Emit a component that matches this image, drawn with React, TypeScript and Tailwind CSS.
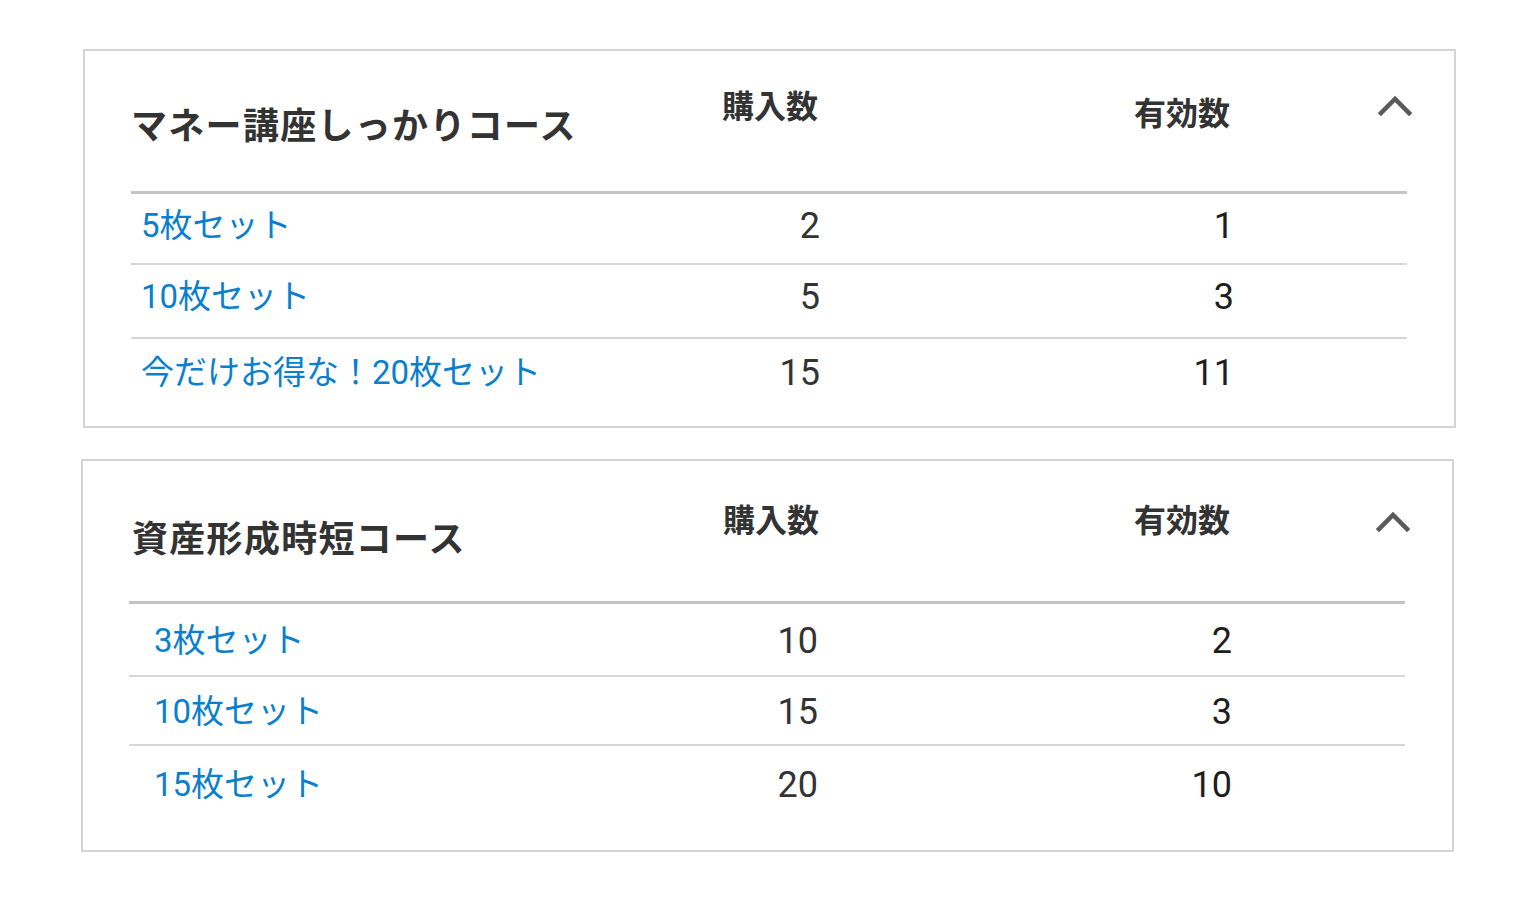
import React from "react";

type Row = { name: string; bought: string; valid: string; h: string };

const Chevron = () => (
  <svg width="34" height="24" viewBox="0 0 34 24" className="block">
    <polyline points="3,20 17,6 31,20" fill="none" stroke="#5a5a5a" strokeWidth="4.5" strokeLinecap="square" />
  </svg>
);

function Card(props: {
  cls: string;
  title: string;
  titlePt: string;
  h1Pt: string;
  h2Pt: string;
  chevPt: string;
  namePl: string;
  rows: Row[];
  bottom: string;
}) {
  return (
    <div className={`border-2 border-[#d4d4d4] bg-white w-[1373px] pl-[46px] pr-[47px] ${props.cls}`}>
      <div className="flex h-[140px] items-start">
        <div
          className={`flex-1 text-[36px] leading-[40px] font-bold text-[#333] tracking-[1.3px] ${props.titlePt}`}
          style={{ fontFamily: "'Noto Sans CJK JP', sans-serif" }}
        >
          {props.title}
        </div>
        <div
          className={`w-[120px] text-right text-[32px] leading-[40px] font-bold text-[#333] ${props.h1Pt}`}
          style={{ fontFamily: "'Noto Sans CJK JP', sans-serif" }}
        >
          購入数
        </div>
        <div
          className={`w-[411px] text-right text-[32px] leading-[40px] font-bold text-[#333] ${props.h2Pt}`}
          style={{ fontFamily: "'Noto Sans CJK JP', sans-serif" }}
        >
          有効数
        </div>
        <div className={`w-[176px] flex justify-end -mr-[5px] ${props.chevPt}`}>
          <Chevron />
        </div>
      </div>
      <div className="h-[3px] bg-[#c4c4c4]" />
      {props.rows.map((r, i) => (
        <div
          key={i}
          className={`flex items-center ${r.h} ${i < props.rows.length - 1 ? "border-b-2 border-[#d6d6d6]" : ""}`}
          style={{ fontFamily: "Roboto, 'Noto Sans CJK JP', sans-serif" }}
        >
          <div className={`flex-1 text-[33px] text-[#0a7fcf] ${props.namePl}`}>{r.name}</div>
          <div className="w-[120px] text-right text-[36px] text-[#333]">{r.bought}</div>
          <div className="w-[414px] text-right text-[36px] text-[#1e1e1e]">{r.valid}</div>
          <div className="w-[173px]" />
        </div>
      ))}
      <div className={props.bottom} />
    </div>
  );
}

export default function App() {
  return (
    <div className="min-h-[902px] w-[1536px] bg-white pt-[49px]">
      <Card
        cls="ml-[83px]"
        title="マネー講座しっかりコース"
        titlePt="pt-[52px]"
        h1Pt="pt-[33px] pr-[7px]"
        h2Pt="pt-[40px] pr-[6px]"
        chevPt="pt-[42px]"
        namePl="pl-[10px]"
        rows={[
          { name: "5枚セット", bought: "2", valid: "1", h: "h-[71px] pb-[5px]" },
          { name: "10枚セット", bought: "5", valid: "3", h: "h-[74px] pb-[8px]" },
          { name: "今だけお得な！20枚セット", bought: "15", valid: "11", h: "h-[68px]" },
        ]}
        bottom="h-[19px]"
      />
      <Card
        cls="ml-[81px] mt-[31px]"
        title="資産形成時短コース"
        titlePt="pt-[55px] pl-[3px]"
        h1Pt="pt-[37px] pr-[4px]"
        h2Pt="pt-[37px] pr-[4px]"
        chevPt="pt-[48px]"
        namePl="pl-[25px]"
        rows={[
          { name: "3枚セット", bought: "10", valid: "2", h: "h-[73px] pt-[3px]" },
          { name: "10枚セット", bought: "15", valid: "3", h: "h-[69px] pt-[3px]" },
          { name: "15枚セット", bought: "20", valid: "10", h: "h-[74px] pt-[4px]" },
        ]}
        bottom="h-[30px]"
      />
    </div>
  );
}
